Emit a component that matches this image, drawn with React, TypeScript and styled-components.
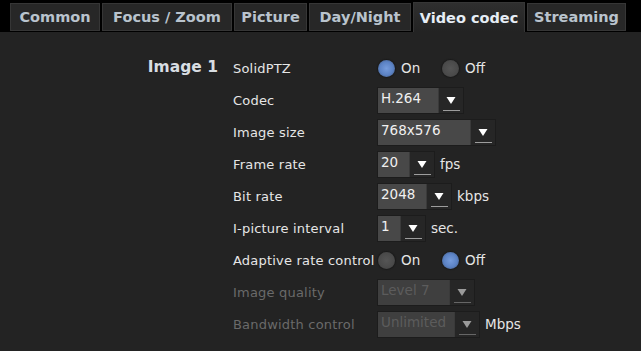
import React from 'react'
import styled, { createGlobalStyle } from 'styled-components'

const GlobalStyle = createGlobalStyle`
  html, body {
    margin: 0;
    padding: 0;
    background: #232323;
  }
  body {
    font-family: 'DejaVu Sans', Verdana, sans-serif;
    width: 641px;
    height: 351px;
    overflow: hidden;
  }
`

const tabs = [
  { name: 'Common', width: 90 },
  { name: 'Focus / Zoom', width: 130 },
  { name: 'Picture', width: 73 },
  { name: 'Day/Night', width: 102 },
  { name: 'Video codec', width: 112 },
  { name: 'Streaming', width: 99 },
]

type Row =
  | { kind: 'radio'; label: string; value: 'On' | 'Off' }
  | { kind: 'select'; label: string; value: string; width: number; unit?: string; disabled?: boolean }

const rows: Row[] = [
  { kind: 'radio', label: 'SolidPTZ', value: 'On' },
  { kind: 'select', label: 'Codec', value: 'H.264', width: 60 },
  { kind: 'select', label: 'Image size', value: '768x576', width: 92 },
  { kind: 'select', label: 'Frame rate', value: '20', width: 31, unit: 'fps' },
  { kind: 'select', label: 'Bit rate', value: '2048', width: 48, unit: 'kbps' },
  { kind: 'select', label: 'I-picture interval', value: '1', width: 22, unit: 'sec.' },
  { kind: 'radio', label: 'Adaptive rate control', value: 'Off' },
  { kind: 'select', label: 'Image quality', value: 'Level 7', width: 71, disabled: true },
  { kind: 'select', label: 'Bandwidth control', value: 'Unlimited', width: 76, unit: 'Mbps', disabled: true },
]

const Arrow = () => (
  <svg width="24" height="25" viewBox="0 0 24 25">
    <path d="M7.5 9 L16.5 9 L12 16 Z" fill="currentColor" />
    <rect x="4" y="22" width="17" height="1" fill="currentColor" opacity="0.55" />
  </svg>
)

const App = () => {
  return (
    <Page>
      <GlobalStyle />
      <TabBar>
        {tabs.map(t => (
          <Tab key={t.name} $width={t.width} $active={t.name === 'Video codec'}>{t.name}</Tab>
        ))}
      </TabBar>
      <Content>
        <Heading>Image 1</Heading>
        <Form>
          {rows.map(r => (
            <FormRow key={r.label}>
              <Label $disabled={r.kind === 'select' && r.disabled}>{r.label}</Label>
              {r.kind === 'radio' ? (
                <Radios>
                  <RadioItem>
                    <RadioDot $checked={r.value === 'On'} />
                    On
                  </RadioItem>
                  <RadioItem>
                    <RadioDot $checked={r.value === 'Off'} />
                    Off
                  </RadioItem>
                </Radios>
              ) : (
                <Controls>
                  <Select $disabled={r.disabled}>
                    <SelectValue $disabled={r.disabled} style={{ width: r.width }}>{r.value}</SelectValue>
                    <SelectButton $disabled={r.disabled}><Arrow /></SelectButton>
                  </Select>
                  {r.unit && <Unit>{r.unit}</Unit>}
                </Controls>
              )}
            </FormRow>
          ))}
        </Form>
      </Content>
    </Page>
  )
}

const Page = styled.div`
  width: 641px;
  height: 351px;
  display: flex;
  flex-direction: column;
  background: #232323;
`

const TabBar = styled.div`
  display: flex;
  align-items: flex-end;
  gap: 2px;
  height: 32px;
  padding-left: 10px;
  background: #000;
`

const Tab = styled.div<{ $active?: boolean; $width: number }>`
  width: ${({ $width }) => $width}px;
  height: ${({ $active }) => ($active ? '30px' : '28px')};
  margin-bottom: ${({ $active }) => ($active ? '0' : '1px')};
  box-sizing: border-box;
  display: flex;
  align-items: center;
  justify-content: center;
  white-space: nowrap;
  font-size: 14.5px;
  font-weight: bold;
  color: ${({ $active }) => ($active ? '#e6edf5' : '#b9c3cd')};
  background: ${({ $active }) => ($active ? 'linear-gradient(#2f2f2f, #232323)' : '#272727')};
  border: 1px solid #363636;
  border-bottom: ${({ $active }) => ($active ? 'none' : '1px solid #363636')};
`

const Content = styled.div`
  flex: 1;
  display: flex;
  padding: 20px 0 0 0;
`

const Heading = styled.div`
  width: 218px;
  box-sizing: border-box;
  text-align: right;
  height: 32px;
  line-height: 31px;
  font-size: 15.5px;
  font-weight: bold;
  color: #d8dde2;
`

const Form = styled.div`
  display: grid;
  grid-auto-rows: 32px;
  margin-left: 15px;
`

const FormRow = styled.div`
  display: flex;
  align-items: center;
`

const Label = styled.div<{ $disabled?: boolean }>`
  width: 145px;
  font-size: 13px;
  letter-spacing: 0.2px;
  color: ${({ $disabled }) => ($disabled ? '#6a6a6a' : '#e6e6e6')};
`

const Radios = styled.div`
  display: flex;
`

const RadioItem = styled.label`
  display: flex;
  align-items: center;
  gap: 6px;
  width: 64px;
  font-size: 13.5px;
  color: #e6e6e6;
`

const RadioDot = styled.span<{ $checked?: boolean }>`
  width: 17px;
  height: 17px;
  border-radius: 50%;
  box-sizing: border-box;
  background: ${({ $checked }) =>
    $checked
      ? 'radial-gradient(circle, #769cdc 0, #5b82c4 55%, #3c4c66 100%)'
      : 'radial-gradient(circle, #555 0, #4a4a4a 60%, #333 100%)'};
  box-shadow: 0 0 1px 1px #1a1a1a;
`

const Controls = styled.div`
  display: flex;
  align-items: center;
  gap: 5px;
  margin-left: -1px;
`

const Select = styled.div<{ $disabled?: boolean }>`
  display: flex;
  height: 25px;
  border: 1px solid #1c1c1c;
  color: ${({ $disabled }) => ($disabled ? '#5c5c5c' : '#f0f0f0')};
`

const SelectValue = styled.div<{ $disabled?: boolean }>`
  box-sizing: border-box;
  padding-left: 3px;
  font-size: 13.5px;
  line-height: 20px;
  background: ${({ $disabled }) => ($disabled ? '#3f3f3f' : '#484848')};
`

const SelectButton = styled.div<{ $disabled?: boolean }>`
  width: 24px;
  display: flex;
  align-items: center;
  justify-content: center;
  background: #262626;
  border-left: 1px solid #3a3a3a;
  color: ${({ $disabled }) => ($disabled ? '#9a9a9a' : '#ffffff')};
`

const Unit = styled.span`
  font-size: 13.5px;
  color: #e6e6e6;
`

export default App
